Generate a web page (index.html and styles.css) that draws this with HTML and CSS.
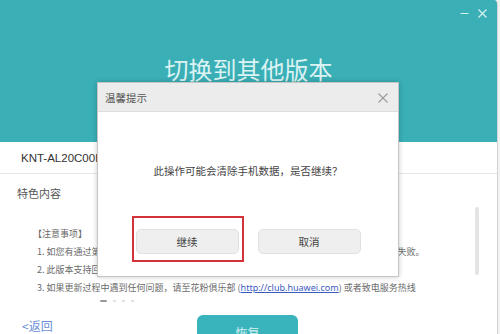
FILE: index.html
```html
<!DOCTYPE html>
<html lang="zh-CN">
<head>
<meta charset="utf-8">
<title>切换到其他版本</title>
<link rel="stylesheet" href="styles.css">
</head>
<body>
<div class="window">
  <header class="header">
    <div class="controls">
      <svg class="ctl" width="9" height="9" viewBox="0 0 9 9"><path d="M0.5 4.5H8.5" stroke="#d6f1f1" stroke-width="1.2"/></svg>
      <svg class="ctl" width="9" height="9" viewBox="0 0 9 9"><path d="M0.5 0.5L8.5 8.5M8.5 0.5L0.5 8.5" stroke="#d6f1f1" stroke-width="1.2"/></svg>
    </div>
    <h1 class="title">切换到其他版本</h1>
  </header>

  <div class="model">KNT-AL20C00B181 (C00E180R1P2)</div>
  <div class="features">特色内容</div>

  <div class="panel">
    <div class="notes">
      <p class="line">【注意事项】</p>
      <p class="line">1. 如您有通过第三方工具或其他非官方途径升级过手机系统，可能会导致本次回退操作升级失败。</p>
      <p class="line">2. 此版本支持回退到旧版本，回退后部分应用数据可能无法恢复。</p>
      <p class="line">3. 如果更新过程中遇到任何问题，请至花粉俱乐部 (<a class="link" href="#">http://club.huawei.com</a>) 或者致电服务热线</p>
    </div>
    <div class="scrollbar"></div>
  </div>

  <div class="dots">
    <span class="dot active"></span><span class="dot"></span><span class="dot"></span><span class="dot"></span>
  </div>

  <div class="footer">
    <a class="back" href="#">&lt;返回</a>
    <button class="restore">恢复</button>
  </div>

  <div class="dialog">
    <div class="dlg-head">
      <span class="dlg-title">温馨提示</span>
      <svg width="10" height="10" viewBox="0 0 10 10"><path d="M0.5 0.5L9.5 9.5M9.5 0.5L0.5 9.5" stroke="#9a9a9a" stroke-width="1.1"/></svg>
    </div>
    <div class="dlg-body">
      <p class="msg">此操作可能会清除手机数据，是否继续？</p>
      <div class="btns">
        <button class="btn">继续</button>
        <button class="btn">取消</button>
      </div>
    </div>
    <div class="highlight"></div>
  </div>
</div>
</body>
</html>
```

FILE: styles.css
```css
* { box-sizing: border-box; margin: 0; padding: 0; }

html, body {
  width: 500px;
  height: 334px;
  overflow: hidden;
}

body {
  background: #f2f2f2;
  font-family: "Noto Sans", "Noto Sans CJK SC", sans-serif;
  color: #333;
}

.window {
  position: relative;
  width: 498px;
  height: 334px;
  background: #fff;
  border-right: 1px solid #d4d4d4;
  border-top-right-radius: 4px;
  overflow: hidden;
  display: flex;
  flex-direction: column;
}

.header {
  height: 142px;
  flex: none;
  background: #3aafb6;
  padding-top: 9px;
  display: flex;
  flex-direction: column;
  align-items: center;
}

.controls {
  align-self: flex-end;
  display: flex;
  gap: 9px;
  padding-right: 10px;
  height: 12px;
}

.title {
  margin-top: 33px;
  font-size: 24px;
  line-height: 30px;
  font-weight: 400;
  color: #dcf3f3;
  font-family: "Noto Sans CJK SC", sans-serif;
}

.model {
  height: 32px;
  flex: none;
  display: flex;
  align-items: center;
  padding-left: 21px;
  font-size: 11.5px;
  color: #333;
  font-family: "Liberation Sans", "Noto Sans CJK SC", sans-serif;
  border-bottom: 1px solid #e6e6e6;
  white-space: nowrap;
}

.features {
  margin-top: 11px;
  padding-left: 17px;
  font-size: 11px;
  line-height: 16px;
  color: #555;
  font-family: "Noto Sans CJK SC", sans-serif;
}

.panel {
  display: flex;
  padding: 0 18px 0 33px;
}

.notes {
  flex: 1;
  padding-top: 24px;
}

.line {
  font-size: 9px;
  line-height: 18px;
  color: #6a6a6a;
  white-space: nowrap;
  font-family: "Noto Sans CJK SC", sans-serif;
}

.line:not(:first-child) {
  padding-left: 4px;
}

.link {
  color: #3c5bbf;
  text-decoration: underline;
  font-family: "Noto Sans", sans-serif;
}

.scrollbar {
  width: 4px;
  height: 68px;
  margin-top: 6px;
  background: #e4e4e4;
  border-radius: 2px;
  flex: none;
}

.dots {
  display: flex;
  align-items: center;
  gap: 6px;
  padding-left: 100px;
  margin-top: 3px;
  height: 3px;
}

.dot {
  width: 3px;
  height: 2px;
  background: #dcdcdc;
  border-radius: 1px;
}

.dot.active {
  width: 7px;
  background: #9a9a9a;
}

.footer {
  display: flex;
  align-items: flex-start;
  margin-top: 10px;
  padding-left: 22px;
}

.back {
  width: 175px;
  margin-top: 6px;
  font-size: 12px;
  line-height: 16px;
  color: #6a8fd8;
  text-decoration: none;
  font-family: "Noto Sans CJK SC", sans-serif;
}

.restore {
  width: 101px;
  height: 34px;
  margin-top: 3px;
  border: none;
  border-radius: 6px;
  background: #3ab4bc;
  color: #d8f2f2;
  font-size: 12px;
  font-family: "Noto Sans CJK SC", sans-serif;
}

/* dialog overlay */
.dialog {
  position: absolute;
  left: 97px;
  top: 82px;
  width: 302px;
  height: 195px;
  background: #fff;
  border: 1px solid #c6c6c6;
  box-shadow: 0 0 5px rgba(0, 0, 0, 0.22);
  display: flex;
  flex-direction: column;
}

.dlg-head {
  height: 29px;
  flex: none;
  background: #ececec;
  border-bottom: 1px solid #dedede;
  display: flex;
  align-items: center;
  justify-content: space-between;
  padding: 1px 10px 0 7px;
}

.dlg-title {
  font-size: 10.5px;
  color: #555;
  font-family: "Noto Sans CJK SC", sans-serif;
}

.dlg-body {
  flex: 1;
  display: flex;
  flex-direction: column;
  align-items: center;
}

.msg {
  margin-top: 51px;
  font-size: 10.5px;
  line-height: 16px;
  color: #444;
  font-family: "Noto Sans CJK SC", sans-serif;
}

.btns {
  display: flex;
  gap: 19px;
  margin-top: 50px;
}

.btn {
  width: 103px;
  height: 25px;
  background: #efefef;
  border: 1px solid #e0e0e0;
  border-radius: 5px;
  font-size: 10.5px;
  color: #444;
  font-family: "Noto Sans CJK SC", sans-serif;
}

.highlight {
  position: absolute;
  left: 34px;
  top: 133px;
  width: 112px;
  height: 46px;
  border: 2px solid #d2333a;
}
```
